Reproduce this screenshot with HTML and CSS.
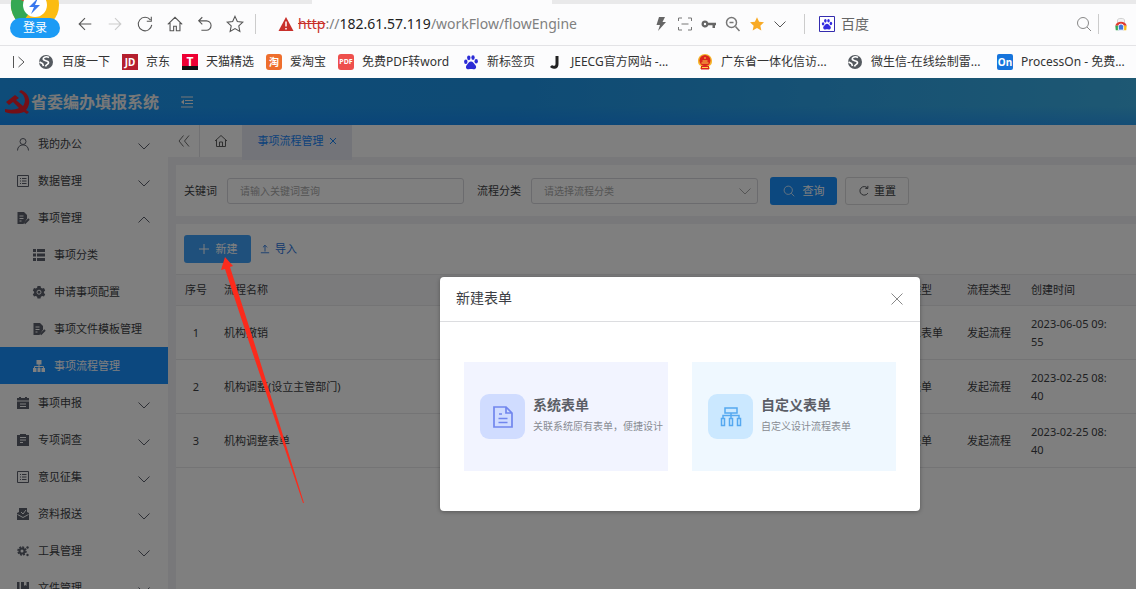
FILE: index.html
```html
<!DOCTYPE html>
<html lang="zh-CN">
<head>
<meta charset="utf-8">
<title>省委编办填报系统</title>
<link rel="stylesheet" href="styles.css">
</head>
<body>
<svg class="defs" aria-hidden="true">
  <symbol id="down" viewBox="0 0 14 14"><path d="M1.500 4.500 7 10l5.500-5.500" fill="none" stroke="currentColor"/></symbol>
  <symbol id="star" viewBox="0 0 20 20"><path d="m10 1.500 2.600 5.700 6.100.7-4.500 4.200 1.200 6.100L10 15.100l-5.400 3.100 1.200-6.100L1.300 7.900l6.100-.7z"/></symbol>
  <symbol id="paw" viewBox="0 0 16 16"><g fill="currentColor"><ellipse cx="2.800" cy="7.800" rx="1.700" ry="2.300"/><ellipse cx="5.800" cy="3.800" rx="1.700" ry="2.400"/><ellipse cx="10" cy="3.600" rx="1.700" ry="2.400"/><ellipse cx="13.200" cy="7.300" rx="1.700" ry="2.300"/><path d="M8 7.500c2 0 2.600 1.800 4 3.200 2.400 2.300.6 4.900-1.700 4.600-1.700-.3-2.800-.3-4.500 0-2.400.3-4-2.300-1.800-4.600C5.400 9.300 6 7.500 8 7.500z"/></g></symbol>
  <symbol id="globe" viewBox="0 0 16 16"><circle cx="8" cy="8" r="7" fill="#555a60"/><path d="M11 3.500C8.500 2 5 3 5.200 5.200c.2 2 5.300 1 5.300 3.500 0 1.800-2.500 1.500-3 3.800M1.500 8l3 1.500 1 2.500" fill="none" stroke="#fff" stroke-width="1.700"/></symbol>
  <symbol id="form" viewBox="0 0 14 14"><path d="M1.500 1.500h11v11h-11zM4 4.500h1M6 4.500h4.500M4 7h1M6 7h4.500M4 9.500h1M6 9.500h4.500" fill="none" stroke="currentColor"/></symbol>
  <symbol id="docpen" viewBox="0 0 14 14"><path d="M1.500 1h6.500l3 3v3.500L7.500 13h-6z" fill="currentColor"/><path d="M3.500 5h4M3.500 7.500h4M3.500 10h2" stroke="#fff" fill="none"/><path d="m8.500 12.500 4.500-4.500" stroke="currentColor" stroke-width="2"/></symbol>
  <symbol id="search" viewBox="0 0 16 16"><circle cx="7" cy="7" r="5.500" fill="none" stroke="currentColor"/><path d="m11 11 4 4" stroke="currentColor"/></symbol>
</svg>

<header class="browser">
  <div class="tabstrip"><span class="tab-current"></span></div>
  <div class="toolbar">
    <div class="account">
      <svg class="account-logo" viewBox="0 0 50 30"><circle cx="25" cy="5" r="24" fill="#fbbc12"/><path d="M25 5 11 24.500A24 24 0 0 1 4-7z" fill="#35a853"/><path d="M25 5 2-3V-20h46z" fill="#e8402f"/><circle cx="25" cy="5" r="12" fill="#fff"/><path d="m28-2-9 9h5l-3 7 9-9h-5z" fill="#3978ee"/></svg>
      <button class="login">登录</button>
    </div>
    <nav class="nav-tools">
      <button aria-label="后退"><svg viewBox="0 0 20 20"><path d="M17 10H3.500M10 3.500 3.500 10l6.500 6.500"/></svg></button>
      <button aria-label="前进" class="off"><svg viewBox="0 0 20 20"><path d="M3 10h13.500M10 3.500l6.500 6.500-6.500 6.500"/></svg></button>
      <button aria-label="刷新"><svg viewBox="0 0 20 20"><path d="M16 5.500A7.500 7.500 0 1 0 17.500 11M17 2v5h-5"/></svg></button>
      <button aria-label="主页"><svg viewBox="0 0 20 20"><path d="m2 10.500 8-8 8 8M4.500 8.500v9h4v-5h3v5h4v-9"/></svg></button>
      <button aria-label="撤销"><svg viewBox="0 0 20 20"><path d="M7 2.500 3 6.500l4 4M3 6.500h8.500a5 5 0 0 1 0 10.500H6"/></svg></button>
      <button aria-label="收藏"><svg viewBox="0 0 20 20"><use href="#star"/></svg></button>
    </nav>
    <div class="address">
      <svg class="warn" viewBox="0 0 16 16"><path d="m8 1 7.500 14H.5z" fill="#c8302b"/><path d="M8 5.500v5M8 12v1.500" stroke="#fff" stroke-width="1.500"/></svg>
      <span class="url"><s>http</s>://<b>182.61.57.119</b>/workFlow/flowEngine</span>
    </div>
    <div class="page-tools">
      <svg viewBox="0 0 16 16"><path d="M6 1h6L9.500 6H13l-8 9 2-6H3.500z" fill="#666"/></svg>
      <svg viewBox="0 0 16 16"><path d="M1.500 5V2H5M11 2h3.500v3M14.500 11v3H11M5 14H1.500v-3M4.500 8h7" fill="none" stroke="#777"/></svg>
      <svg viewBox="0 0 16 16"><path d="M4 4.500a3.500 3.500 0 0 1 3.300 2.300H15v2.500h-1V12h-2.500V9.300H7.300A3.500 3.500 0 1 1 4 4.500zm0 2.300a1.200 1.200 0 1 0 0 2.400 1.200 1.200 0 0 0 0-2.400z" fill="#666" fill-rule="evenodd"/></svg>
      <svg viewBox="0 0 16 16"><path d="M4.500 6.500h4M10.500 10.500 14.500 15" fill="none" stroke="#777" stroke-width="1.500"/><circle cx="6.500" cy="6.500" r="5" fill="none" stroke="#777" stroke-width="1.500"/></svg>
      <svg viewBox="0 0 20 20" fill="#f8aa25"><use href="#star"/></svg>
      <svg class="more" viewBox="0 0 14 14"><use href="#down"/></svg>
    </div>
    <div class="websearch">
      <svg class="paw-box" viewBox="0 0 16 16"><path d="M.5.500h15v15H.5z" fill="#fff" stroke="#342cae"/><use href="#paw" x="2" y="2" width="12" height="12"/></svg>
      <span>百度</span>
      <svg class="lens" viewBox="0 0 16 16"><use href="#search"/></svg>
    </div>
    <svg class="extension" viewBox="0 0 16 16"><path d="M4 7V3.500C4 1 12 1 12 3.500V7" fill="#f3f3f3" stroke="#ccc"/><path d="M1.500 10c1-6 12-6 13 0z" fill="#df3a31"/><path d="M1.500 10H7l-1 5H2z" fill="#33a852"/><path d="M14.500 10H9l1 5h4z" fill="#f9bb17"/><path d="M5 11a3 3 0 0 1 6 0v4H5z" fill="#3e76de" stroke="#fff"/></svg>
  </div>
  <nav class="bookmarks">
    <svg class="expand" viewBox="0 0 16 16"><path d="M1.500 2v12M6.500 3l5.500 5-5.500 5" fill="none" stroke="#555"/></svg>
    <a href="#"><svg viewBox="0 0 16 16"><use href="#globe"/></svg>百度一下</a>
    <a href="#"><i class="fav jd">JD</i>京东</a>
    <a href="#"><i class="fav tmall">T</i>天猫精选</a>
    <a href="#"><i class="fav taobao">淘</i>爱淘宝</a>
    <a href="#"><i class="fav pdf">PDF</i>免费PDF转word</a>
    <a href="#"><svg class="paw" viewBox="0 0 16 16"><use href="#paw"/></svg>新标签页</a>
    <a href="#"><svg viewBox="0 0 16 16"><path d="M10 2v8c0 4-4 4-6 2" fill="none" stroke="#222" stroke-width="3"/></svg>JEECG官方网站 -...</a>
    <a href="#"><svg viewBox="0 0 16 16"><path d="M8 0c4 0 7 3 7 7 0 3-1 4-3 5l1 3H3l1-3C2 11 1 10 1 7c0-4 3-7 7-7z" fill="#f5b52b"/><circle cx="8" cy="6.500" r="5.500" fill="#da251c"/><path d="M4 12h8v3.500H4z" fill="#da251c"/><path d="M4.500 9h7M5.500 7h5M8 3v2M5 13.500h6" stroke="#ffd84a"/></svg>广东省一体化信访...</a>
    <a href="#"><svg viewBox="0 0 16 16"><use href="#globe"/></svg>微生信-在线绘制雷...</a>
    <a href="#"><i class="fav on">On</i>ProcessOn - 免费...</a>
  </nav>
</header>

<div class="app">
  <header class="app-head">
    <svg class="emblem" viewBox="0 0 26 24"><path d="M17 0c10 4 10 15 5 20l3 2-2 2-3-2c-6 2-13 2-19 0v-3c5 1 10 1 14-1L9 12l-4 3-3-3 9-7 4 3-3 2 7 6c3-4 3-11-4-14z" fill="#e8202e"/></svg>
    <h1>省委编办填报系统</h1>
    <button class="fold" aria-label="收起菜单"><svg viewBox="0 0 14 12"><path d="M1 1h12M5 4.500h8M5 7.500h8M1 11h12" stroke="currentColor" fill="none"/><path d="M4 3.500v5L1 6z" fill="currentColor"/></svg></button>
  </header>

  <div class="workspace">
    <aside class="menu">
      <a href="#"><svg viewBox="0 0 14 14"><circle cx="7" cy="4.500" r="3" fill="none" stroke="currentColor"/><path d="M1.500 13.500c0-7.500 11-7.500 11 0" fill="none" stroke="currentColor"/></svg><span>我的办公</span><svg class="arrow"><use href="#down"/></svg></a>
      <a href="#"><svg><use href="#form"/></svg><span>数据管理</span><svg class="arrow"><use href="#down"/></svg></a>
      <a href="#"><svg><use href="#docpen"/></svg><span>事项管理</span><svg class="arrow open"><use href="#down"/></svg></a>
      <a href="#" class="sub"><svg viewBox="0 0 14 14"><path d="M1 1h3v3H1zM5 1h8v3H5zM1 5.500h3v3H1zM5 5.500h8v3H5zM1 10h3v3H1zM5 10h8v3H5z" fill="currentColor"/></svg><span>事项分类</span></a>
      <a href="#" class="sub"><svg viewBox="0 0 14 14"><path d="m5.500 1-.4 1.800-1.300.7L2 3 .8 5.400l1.300 1.300v1.200L.8 9.200 2 11.400l1.800-.5 1.300.8.400 1.800h3l.4-1.800 1.300-.8 1.800.5 1.200-2.200-1.300-1.300V6.700l1.300-1.300L12 3l-1.800.5-1.300-.7L8.500 1z" fill="currentColor"/><circle cx="7" cy="7.200" r="2" fill="none" stroke="#fff"/></svg><span>申请事项配置</span></a>
      <a href="#" class="sub"><svg><use href="#docpen"/></svg><span>事项文件模板管理</span></a>
      <a href="#" class="sub active"><svg viewBox="0 0 14 14"><path d="M4.500 1h5v4.500h-5zM1 9h3.500v4H1zM5.500 9h3v4h-3zM9.500 9H13v4H9.500z" fill="currentColor"/><path d="M7 5v4M2.500 9V7.500h9V9" fill="none" stroke="currentColor"/></svg><span>事项流程管理</span></a>
      <a href="#"><svg viewBox="0 0 14 14"><path d="M1 2h2V1h2v1h4V1h2v1h2v2.500H1zM1 5.500h12V13H1z" fill="currentColor"/><path d="M4 8h6M4 10.500h6" stroke="#fff"/></svg><span>事项申报</span><svg class="arrow"><use href="#down"/></svg></a>
      <a href="#"><svg viewBox="0 0 14 14"><path d="M1 2h3V1h6v1h3v11H1z" fill="currentColor"/><path d="M4 4.500h6M4 7h6M4 9.500h3" fill="none" stroke="#fff"/></svg><span>专项调查</span><svg class="arrow"><use href="#down"/></svg></a>
      <a href="#"><svg><use href="#form"/></svg><span>意见征集</span><svg class="arrow"><use href="#down"/></svg></a>
      <a href="#"><svg viewBox="0 0 14 14"><path d="M3 1h8v4l2 1v7H1V6l2-1z" fill="currentColor"/><path d="m1.500 7.500 5.500 3 5.500-3M5 5l2 2 3-4" fill="none" stroke="#fff"/></svg><span>资料报送</span><svg class="arrow"><use href="#down"/></svg></a>
      <a href="#"><svg viewBox="0 0 14 14"><circle cx="6" cy="7" r="2.500" fill="none" stroke="currentColor" stroke-width="2"/><circle cx="6" cy="7" r="4" fill="none" stroke="currentColor" stroke-width="1.500" stroke-dasharray="2 1.100"/><circle cx="11.500" cy="3.500" r="1.200" fill="currentColor"/><circle cx="11.500" cy="11" r="1.200" fill="currentColor"/></svg><span>工具管理</span><svg class="arrow"><use href="#down"/></svg></a>
      <a href="#"><svg viewBox="0 0 14 14"><path d="M1 1h2.500v9H13v3H1zM5 1h8v8H5z" fill="currentColor"/><path d="M8 1h2.500v4L9.200 4 8 5z" fill="#fff"/></svg><span>文件管理</span><svg class="arrow"><use href="#down"/></svg></a>
    </aside>

    <main class="content">
      <div class="page-tabs">
        <button class="back" aria-label="向左"><svg viewBox="0 0 14 14"><path d="M6.500 1.500 2 7l4.500 5.500M12 1.500 7.500 7l4.500 5.500" fill="none" stroke="currentColor"/></svg></button>
        <button class="home" aria-label="首页"><svg viewBox="0 0 14 14"><path d="m1 7 6-5.500L13 7M2.500 6v6.500h9V6M5.500 12.500V8h3v4.500" fill="none" stroke="currentColor"/></svg></button>
        <button class="current">事项流程管理<svg viewBox="0 0 8 8"><path d="m1 1 6 6M7 1 1 7" stroke="currentColor"/></svg></button>
      </div>

      <form class="filters">
        <label for="kw">关键词</label>
        <input id="kw" type="text" placeholder="请输入关键词查询">
        <label for="cat">流程分类</label>
        <div class="select"><select id="cat"><option>请选择流程分类</option></select><svg><use href="#down"/></svg></div>
        <button type="button" class="btn primary"><svg viewBox="0 0 16 16"><use href="#search"/></svg>查询</button>
        <button type="reset" class="btn plain"><svg viewBox="0 0 14 14"><path d="M11 3.500a5 5 0 1 0 .5 6M11.500 1v3H8.500" fill="none" stroke="currentColor"/></svg>重置</button>
      </form>

      <section class="records">
        <div class="actions">
          <button class="btn create"><svg viewBox="0 0 12 12"><path d="M6 1v10M1 6h10" stroke="currentColor"/></svg>新建</button>
          <button class="import"><svg viewBox="0 0 12 12"><path d="M6 9V1.500M3.500 4 6 1.500 8.500 4M1 10.500h10" fill="none" stroke="currentColor"/></svg>导入</button>
        </div>
        <table>
          <colgroup><col class="c-no"><col><col class="c-form"><col class="c-type"><col class="c-time"></colgroup>
          <thead><tr><th>序号</th><th>流程名称</th><th>表单类型</th><th>流程类型</th><th>创建时间</th></tr></thead>
          <tbody>
            <tr><td>1</td><td>机构撤销</td><td>自定义表单</td><td>发起流程</td><td>2023-06-05 09:<br>55</td></tr>
            <tr><td>2</td><td>机构调整(设立主管部门)</td><td>系统表单</td><td>发起流程</td><td>2023-02-25 08:<br>40</td></tr>
            <tr><td>3</td><td>机构调整表单</td><td>系统表单</td><td>发起流程</td><td>2023-02-25 08:<br>40</td></tr>
          </tbody>
        </table>
      </section>
    </main>
  </div>

  <div class="mask">
    <section class="dialog" role="dialog" aria-labelledby="dlg-title">
      <header>
        <h2 id="dlg-title">新建表单</h2>
        <button class="close" aria-label="关闭"><svg viewBox="0 0 12 12"><path d="m.5.500 11 11M11.500.500l-11 11" stroke="currentColor"/></svg></button>
      </header>
      <div class="choices">
        <button class="choice system">
          <span class="tile"><svg viewBox="0 0 22 24"><path d="M2 2h12l6 6v14H2zM14 2v6h6M7 9h3M6.500 13.500h9M6.500 17.500h9" fill="none" stroke="currentColor" stroke-width="1.700"/></svg></span>
          <span class="copy"><strong>系统表单</strong><small>关联系统原有表单，便捷设计</small></span>
        </button>
        <button class="choice custom">
          <span class="tile"><svg viewBox="0 0 22 24"><path d="M5 3h12v5H5zM11 8v5M3 13v-2.500h16V13M1.500 13.500h3v7h-3zM9.500 13.500h3v7h-3zM17.500 13.500h3v7h-3z" fill="none" stroke="currentColor" stroke-width="1.500"/></svg></span>
          <span class="copy"><strong>自定义表单</strong><small>自定义设计流程表单</small></span>
        </button>
      </div>
    </section>
  </div>
</div>

<svg class="pointer" viewBox="0 0 84 248" aria-hidden="true"><path d="M5 0 13 9 10 10 34 85 84 246 83 246 30 88 5 12 1 13z" fill="#fb2b1c"/></svg>
</body>
</html>
```
FILE: styles.css
```css
* { box-sizing: border-box; }
body {
  margin: 0;
  height: 100vh;
  display: flex;
  flex-direction: column;
  overflow: hidden;
  position: relative;
  font: 11px/18px "Noto Sans", "Noto Sans CJK SC", sans-serif;
  color: #3c3e44;
}
button, input, select { font: inherit; color: inherit; margin: 0; padding: 0; border: 0; background: none; }
button { display: flex; align-items: center; justify-content: center; white-space: nowrap; }
a { color: inherit; text-decoration: none; }
h1, h2 { margin: 0; }
svg { display: block; flex: none; }
.defs { position: absolute; width: 0; height: 0; }

/* browser chrome */
.browser { flex: none; background: #fcfcfd; }
.tabstrip { height: 4px; background: #e9e9ea; padding-left: 312px; }
.tab-current { display: block; width: 240px; height: 4px; background: #fcfcfd; }
.toolbar { height: 42px; display: flex; align-items: center; padding-bottom: 2px; border-bottom: 1px solid #e3e3e6; }
.account { position: relative; width: 70px; height: 39px; flex: none; }
.account-logo { position: absolute; left: 10px; top: -4px; width: 50px; height: 30px; }
.login { position: absolute; left: 10px; top: 14px; width: 50px; height: 20px; border-radius: 10px; background: #1c9bf5; color: #fff; font-size: 12px; }
.nav-tools { display: flex; border-right: 1px solid #ccc; height: 20px; align-items: center; padding-right: 5px; }
.nav-tools button { width: 30px; }
.nav-tools svg { width: 18px; height: 18px; fill: none; stroke: #555; stroke-width: 1.200; }
.nav-tools .off svg { stroke: #ccc; }
.address { flex: 1; display: flex; align-items: center; gap: 4px; padding-left: 22px; min-width: 0; }
.warn { width: 16px; height: 16px; }
.url { font-size: 14px; color: #808080; white-space: nowrap; }
.url s { color: #c8302b; }
.url b { font-weight: 400; color: #222; }
.page-tools { display: flex; gap: 8px; padding-right: 17px; border-right: 1px solid #ccc; height: 20px; align-items: center; color: #555; }
.page-tools svg { width: 16px; height: 16px; }
.page-tools .more { width: 14px; }
.websearch { width: 294px; height: 20px; display: flex; align-items: center; gap: 6px; padding: 0 6px 0 14px; border-right: 1px solid #ccc; font-size: 14px; color: #666; }
.paw-box { width: 16px; height: 16px; color: #342cdf; }
.lens { width: 16px; height: 16px; margin-left: auto; color: #888; }
.extension { width: 14px; height: 14px; margin: 0 8px 0 15px; }
.bookmarks {
  height: 32px;
  display: grid;
  grid-template-columns: 26px 84px 60px 84px 72px 125px 84px 150px 150px 150px 1fr;
  align-items: center;
  padding-left: 12px;
  font-size: 12px;
  color: #333;
}
.bookmarks a { display: flex; align-items: center; gap: 8px; white-space: nowrap; }
.bookmarks svg { width: 16px; height: 16px; }
.paw { color: #2c2cd6; }
.fav { width: 16px; height: 16px; flex: none; display: flex; align-items: center; justify-content: center; color: #fff; font-style: normal; font-weight: 700; font-size: 10px; line-height: 16px; }
.jd { background: #b51f2e; }
.tmall { background: linear-gradient(#ee0033 75%, #111 75%); font-size: 12px; }
.taobao { background: #ee6e2d; border-radius: 3px; }
.pdf { background: #ee4f4c; border-radius: 3px; font-size: 7px; }
.on { background: #1674dc; border-radius: 2px; }

/* application */
.app { flex: 1; min-height: 0; display: flex; flex-direction: column; position: relative; overflow: hidden; }
.app-head {
  flex: none;
  height: 47px;
  display: flex;
  align-items: center;
  padding-left: 4px;
  background: linear-gradient(rgba(0, 110, 255, 0) 60%, rgba(0, 110, 255, .3)), linear-gradient(90deg, #1c98f2, #1e96ea 45%, #3cb0e6);
  color: #f0f0f0;
}
.emblem { width: 26px; height: 24px; }
.app-head h1 { font-size: 16px; line-height: 24px; padding-left: 1px; white-space: nowrap; }
.fold { margin-left: 21px; }
.fold svg { width: 14px; height: 12px; }
.workspace { flex: 1; min-height: 0; display: flex; background: #f0f0f5; }

.menu { width: 168px; flex: none; background: #fff; display: flex; flex-direction: column; overflow: hidden; }
.menu a { flex: none; height: 37px; display: flex; align-items: center; gap: 8px; padding: 0 17px 0 16px; }
.menu svg { width: 14px; height: 14px; color: #5c606c; }
.menu span { flex: 1; white-space: nowrap; }
.menu .arrow { margin-top: 4px; }
.menu .sub { padding-left: 32px; }
.menu .open { transform: rotate(180deg); }
.menu .active { background: #1890ff; color: #fff; }
.menu .active svg { color: #fff; }

.content { flex: 1; min-width: 0; display: flex; flex-direction: column; }
.page-tabs { flex: none; height: 32px; display: flex; background: #fff; margin-bottom: 8px; }
.page-tabs svg { width: 14px; height: 14px; }
.page-tabs .back { width: 32px; border-right: 1px solid #e2e2e6; color: #707070; }
.page-tabs .home { width: 42px; color: #606060; }
.page-tabs .current { width: 110px; height: 35px; padding-bottom: 3px; gap: 5px; background: #e6e9f3; color: #1984f5; }
.page-tabs .current svg { width: 8px; height: 8px; }

.filters { flex: none; display: flex; align-items: center; margin: 0 0 8px 8px; padding: 12px 8px 11px; background: #fff; }
.filters label { flex: none; margin-right: 10px; }
.filters input { flex: 0 1 237px; min-width: 0; height: 26px; margin-right: 13px; padding: 0 12px; border: 1px solid #d6d6dc; border-radius: 3px; font-size: 10px; }
.filters input::placeholder { color: #aaa; opacity: 1; }
.select { flex: 0 1 227px; min-width: 0; position: relative; margin-right: 12px; }
.select select { appearance: none; width: 100%; height: 26px; padding: 0 12px; border: 1px solid #d6d6dc; border-radius: 3px; font-size: 10px; color: #aaa; }
.select svg { position: absolute; right: 6px; top: 6px; width: 14px; height: 14px; color: #aaa; pointer-events: none; }
.btn { flex: none; height: 28px; border-radius: 3px; }
.btn svg { width: 12px; height: 12px; }
.primary { width: 67px; gap: 8px; margin-right: 8px; background: #1890ff; color: #fff; }
.plain { width: 64px; gap: 4px; border: 1px solid #dadadc; }

.records { flex: 1; margin-left: 8px; background: #fff; }
.actions { display: flex; align-items: center; gap: 9px; padding: 11px 8px; }
.create { width: 67px; gap: 6px; background: #3fa0f8; color: #fff; }
.import { gap: 5px; color: #1c70dc; }
.import svg { width: 10px; height: 10px; }
table { width: 100%; table-layout: fixed; border-collapse: collapse; }
.c-no { width: 40px; }
.c-form { width: 79px; }
.c-type { width: 64px; }
.c-time { width: 113px; }
th, td { text-align: left; font-weight: 400; padding: 0 8px; border-bottom: 1px solid #e8e8eb; white-space: nowrap; }
th { height: 31px; background: #f6f6f8; border-top: 1px solid #e8e8eb; }
td { height: 54px; }
th:first-child, td:first-child { text-align: center; }

/* dialog */
.mask { position: absolute; inset: 0; background: rgba(0, 0, 0, .5); display: flex; align-items: flex-start; justify-content: center; padding: 199px 0 0 224px; }
.dialog { width: 480px; background: #fff; border-radius: 4px; box-shadow: 0 1px 4px rgba(0, 0, 0, .3); }
.dialog header { height: 45px; display: flex; align-items: center; justify-content: space-between; padding: 0 17px 0 16px; border-bottom: 1px solid #dcdde0; }
.dialog h2 { font-size: 14px; line-height: 20px; font-weight: 400; padding-bottom: 2px; }
.close svg { width: 12px; height: 12px; color: #888; }
.choices { display: grid; grid-template-columns: 1fr 1fr; gap: 24px; padding: 40px 24px; }
.choice { height: 109px; justify-content: flex-start; gap: 8px; padding: 0 0 0 16px; text-align: left; }
.system { background: #f2f4ff; }
.custom { background: #eff8ff; }
.tile { width: 45px; height: 45px; flex: none; border-radius: 9px; display: flex; align-items: center; justify-content: center; }
.tile svg { width: 22px; height: 24px; }
.system .tile { background: #d0dcff; color: #7186ee; }
.custom .tile { background: #cbe8ff; color: #55a8f0; }
.copy { display: flex; flex-direction: column; gap: 3px; padding-bottom: 4px; }
.copy strong { font-size: 14px; line-height: 20px; color: #5b5e66; }
.copy small { font-size: 10px; line-height: 16px; color: #888b92; }

.pointer { position: absolute; left: 220px; top: 257px; width: 84px; height: 248px; pointer-events: none; }
```
